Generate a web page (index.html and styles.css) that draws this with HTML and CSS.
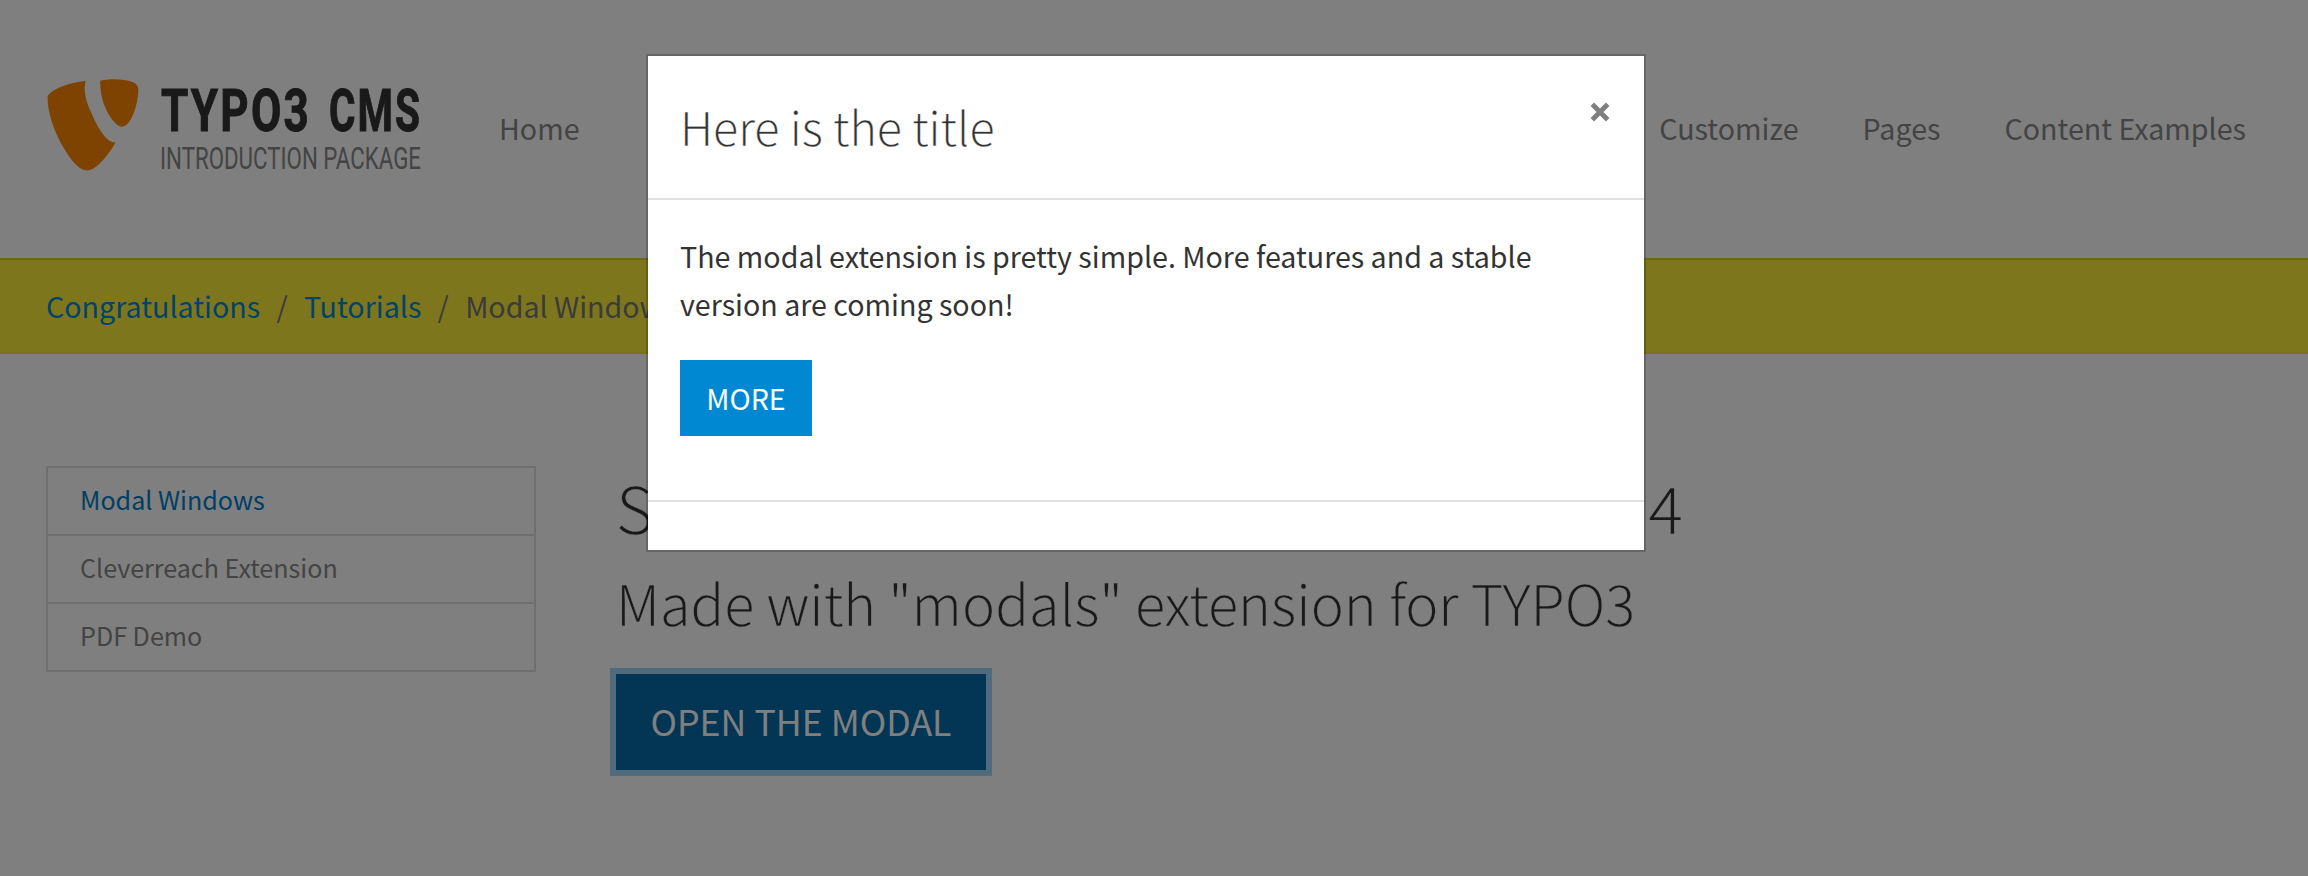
FILE: index.html
```html
<!DOCTYPE html>
<html lang="en">
<head>
<meta charset="utf-8">
<title>Modal Windows</title>
<link rel="stylesheet" href="styles.css">
</head>
<body>
<header class="header">
  <a class="brand">
    <svg class="brand-mark" viewBox="48 51 280 282">
      <path d="M53 107C70 85 115 68 168 62C160 85 166 120 185 160C205 205 230 250 258 248C235 285 200 332 172 332C150 332 125 305 100 262C75 220 50 155 53 107Z"/>
      <path d="M211 62C240 55 285 56 312 67C327 75 327 85 325 105C320 150 300 200 277 200C255 200 222 150 214 100C212 85 211 72 211 62Z"/>
    </svg>
    <svg class="brand-text" width="262" height="104" viewBox="0 0 262 104">
      <text class="brand-name" x="1" y="54" textLength="150" lengthAdjust="spacingAndGlyphs">TYPO3</text>
      <text class="brand-name" x="169" y="54" textLength="93" lengthAdjust="spacingAndGlyphs">CMS</text>
      <text class="brand-sub" x="0" y="92" textLength="261" lengthAdjust="spacingAndGlyphs">INTRODUCTION PACKAGE</text>
    </svg>
  </a>
  <nav class="nav">
    <a class="nav-home">Home</a>
    <a>Customize</a>
    <a>Pages</a>
    <a>Content Examples</a>
  </nav>
</header>
<div class="breadcrumb">
  <a>Congratulations</a><span class="sep">/</span><a>Tutorials</a><span class="sep">/</span><span>Modal Windows</span>
</div>
<main class="main">
  <ul class="subnav">
    <li class="active">Modal Windows</li>
    <li>Cleverreach Extension</li>
    <li>PDF Demo</li>
  </ul>
  <section class="content">
    <h1 class="light"><span>S</span><span>4</span></h1>
    <h2 class="light">Made with "modals" extension for TYPO3</h2>
    <button class="btn btn-lg">OPEN THE MODAL</button>
  </section>
</main>
<div class="backdrop">
  <div class="modal">
    <div class="modal-header">
      <h4 class="light">Here is the title</h4>
      <svg class="close" width="20" height="20" viewBox="0 0 20 20"><path d="M2.3 2.3L17.7 17.7M17.7 2.3L2.3 17.7"/></svg>
    </div>
    <div class="modal-body">
      <p>The modal extension is pretty simple. More features and a stable<br>version are coming soon!</p>
      <button class="btn">MORE</button>
    </div>
    <div class="modal-footer"></div>
  </div>
</div>
</body>
</html>
```
FILE: styles.css
```css
* { box-sizing: border-box; }
body {
  margin: 0;
  height: 876px;
  overflow: hidden;
  background: #fff;
  color: #333;
  font: 28.63px/48px "Noto Sans CJK JP", "Noto Sans", sans-serif;
}
h1, h2, h4, p, ul { margin: 0; padding: 0; }
.light { font-weight: 300; -webkit-text-stroke: .3px #fff; }

.header {
  display: flex;
  height: 258px;
  padding: 0 62px 0 46px;
}
.brand { display: flex; align-items: flex-start; padding-top: 77px; width: 453px; }
.brand-mark { width: 93px; height: 94px; fill: #ff8700; }
.brand-text { margin-left: 21px; overflow: visible; }
.brand-name { font: 700 58.5px Roboto, sans-serif; letter-spacing: 3px; fill: #333; stroke: #333; stroke-width: 1; }
.brand-sub { font: 30.5px Roboto, sans-serif; fill: #888; }
.nav { display: flex; flex: 1; gap: 64px; padding-top: 104px; color: #888; }
.nav-home { margin-right: auto; }

.breadcrumb {
  height: 96px;
  padding: 22px 46px 0;
  border-top: 2px solid #dccf30;
  border-bottom: 2px solid #f0e135;
  background: #fced38;
  color: #777;
}
.breadcrumb a { color: #0087d6; }
.sep { padding: 0 16.3px; }

.main { display: flex; padding: 112px 46px 0; }
.subnav {
  width: 490px;
  height: 206px;
  border: 2px solid #dedede;
  list-style: none;
  color: #888;
  font-size: 25.1px;
}
.subnav li { height: 68px; padding: 7px 32px; border-bottom: 2px solid #dedede; }
.subnav li:last-child { border-bottom: 0; }
.subnav .active { color: #0080c9; }
.content { margin-left: 80px; }
h1 { display: flex; justify-content: space-between; width: 1067px; font-size: 64.5px; line-height: 80px; }
h2 { margin-top: 16px; font-size: 55.8px; line-height: 80px; white-space: nowrap; }

.btn {
  display: block;
  width: 132px;
  height: 76px;
  padding: 0;
  border: 0;
  background: #0088d2;
  color: #fff;
  font: 28.6px/76px "Noto Sans CJK JP", sans-serif;
}
.btn-lg {
  width: 370px;
  height: 96px;
  margin-top: 32px;
  padding-bottom: 3px;
  background: #066aa8;
  box-shadow: 0 0 0 6px #9ed6f8;
  font-size: 35.7px;
  line-height: 93px;
}

.backdrop { position: fixed; inset: 0; padding: 54px 0 0 646px; background: rgba(0, 0, 0, .5); }
.modal {
  width: 1000px;
  height: 498px;
  border: 2px solid rgba(0, 0, 0, .2);
  background: #fff;
  background-clip: padding-box;
}
.modal-header {
  display: flex;
  justify-content: space-between;
  height: 144px;
  padding: 41px 34.5px 0 32px;
  border-bottom: 2px solid #e0e0e0;
}
h4 { font-size: 46.6px; line-height: 58px; }
.close { margin-top: 5px; stroke: #808080; stroke-width: 5; }
.modal-body { height: 300px; padding: 32px 32px 0; }
.modal-body p { margin-bottom: 32px; white-space: nowrap; }
.modal-footer { height: 50px; border-top: 2px solid #e0e0e0; }
```
